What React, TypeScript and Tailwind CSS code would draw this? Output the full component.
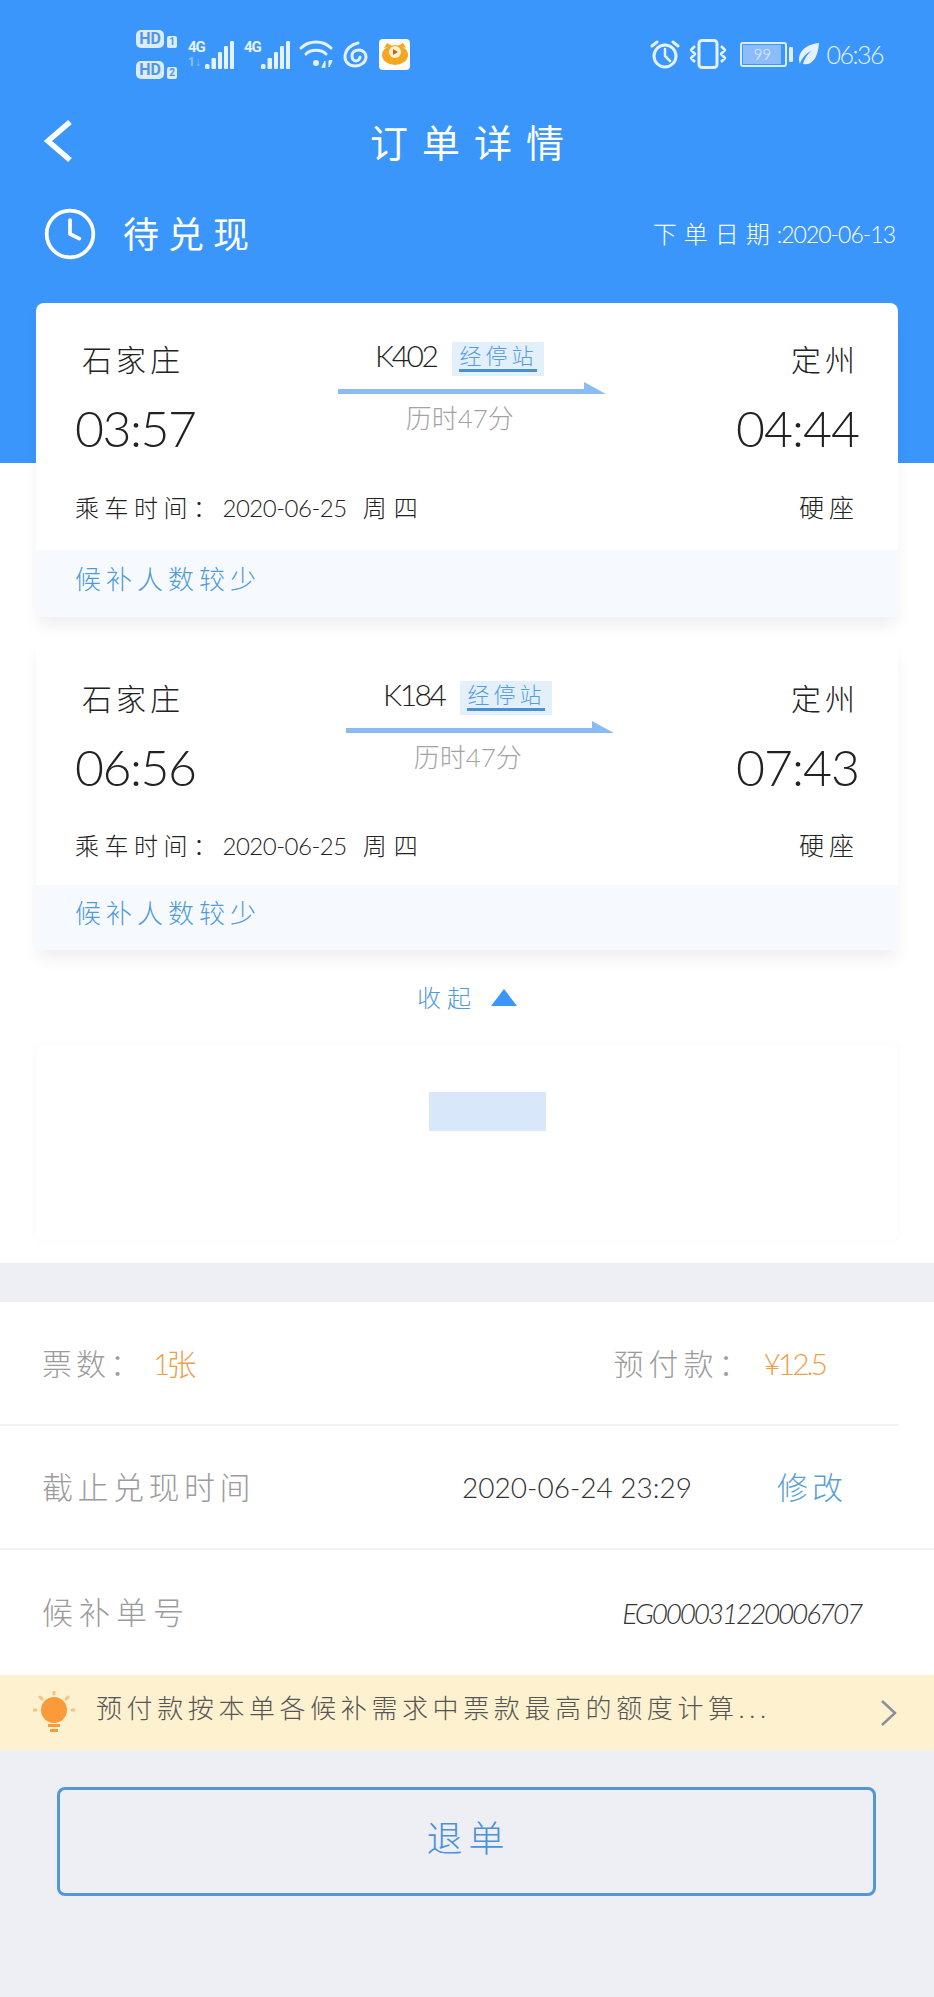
import { Clock } from 'lucide-react';

interface Trip {
  train: string;
  from: string;
  to: string;
  depart: string;
  arrive: string;
  routeClass: string;
  infoClass: string;
  noteClass: string;
}

const TRIPS: Trip[] = [
  {
    train: 'K402',
    from: '石家庄',
    to: '定州',
    depart: '03:57',
    arrive: '04:44',
    routeClass: 'ml-[12px]',
    infoClass: 'mt-[8px] h-[84px]',
    noteClass: 'h-[67px]',
  },
  {
    train: 'K184',
    from: '石家庄',
    to: '定州',
    depart: '06:56',
    arrive: '07:43',
    routeClass: 'ml-[28px]',
    infoClass: 'mt-[10px] h-[78px]',
    noteClass: 'h-[65px]',
  },
];

function Signal({ faint }: { faint?: boolean }) {
  return (
    <div className="flex items-end h-[30px]">
      <div className="flex flex-col w-[17px] h-[30px]">
        <span className="text-[15px] leading-[17px] font-bold text-[#e4f2ff] font-['Roboto',sans-serif] tracking-[-1px]">4G</span>
        {faint && <span className="text-[12px] leading-[12px] font-bold text-[#8fc1fb] font-['Roboto',sans-serif]">1↓</span>}
      </div>
      <svg width="30" height="28" viewBox="0 0 30 28" fill="#e4f2ff">
        <rect x="0" y="23" width="4.5" height="5" rx="1.5" />
        <rect x="6.5" y="17" width="4.5" height="11" rx="1" />
        <rect x="13" y="11" width="4" height="17" rx="1" />
        <rect x="19" y="5" width="4" height="23" rx="1" />
        <rect x="25" y="0" width="4" height="28" rx="1" />
      </svg>
    </div>
  );
}

function HdBadge({ n }: { n: number }) {
  return (
    <div className="flex items-end gap-[3px]">
      <span className="w-[28px] h-[18px] rounded-[5px] bg-[#dcecff] text-[#4f97e6] text-[16px] leading-[18px] font-bold text-center font-['Roboto',sans-serif]">HD</span>
      <span className="w-[10px] h-[12px] rounded-[2px] bg-[#dcecff] text-[#4f97e6] text-[10px] leading-[12px] font-bold text-center font-['Roboto',sans-serif]">{n}</span>
    </div>
  );
}

function StatusBar() {
  return (
    <div className="flex items-center h-[108px] pl-[136px] pr-[51px] text-[#e4f2ff]">
      <div className="flex flex-col gap-[13px] mr-[11px]">
        <HdBadge n={1} />
        <HdBadge n={2} />
      </div>
      <div className="flex gap-[9px] mr-[8px]">
        <Signal faint />
        <Signal />
      </div>
      <svg width="35" height="30" viewBox="0 0 35 30" fill="none" stroke="#e4f2ff" strokeWidth="3" strokeLinecap="round" className="mr-[9px]">
        <path d="M2 9C10 1 24 1 32 9" />
        <path d="M7 15C12 10 22 10 27 15" />
        <circle cx="17" cy="24" r="3" fill="#e4f2ff" stroke="none" />
        <path d="M23 28l3-6v6zM30 22v6l3-6z" fill="#e4f2ff" strokeWidth="1" />
      </svg>
      <svg width="26" height="28" viewBox="0 0 26 28" fill="none" stroke="#e4f2ff" strokeWidth="3" strokeLinecap="round" className="mr-[10px]">
        <path d="M15 3C9 4 2 9 2 17c0 5 4 9 10 9s11-4 11-9c0-4-3-7-7-7s-7 2-7 6c0 3 2 5 4 5s4-2 4-4" />
      </svg>
      <svg width="31" height="31" viewBox="0 0 31 31">
        <rect width="31" height="31" rx="4" fill="#fdfdfb" />
        <ellipse cx="16" cy="16" rx="13" ry="10" fill="#f5a623" />
        <path d="M5 9l3-5 5 3zM27 9l-3-5-5 3z" fill="#f5a623" />
        <circle cx="16" cy="13" r="6" fill="#fff1cf" />
        <path d="M14 10l5 3-5 3z" fill="#c4651c" />
      </svg>

      <div className="flex-1" />

      <svg width="30" height="30" viewBox="0 0 30 30" fill="none" stroke="#e4f2ff" strokeWidth="3" strokeLinecap="round" className="mr-[9px]">
        <circle cx="15" cy="17" r="11" />
        <path d="M15 10v7l5 5" strokeWidth="2.5" />
        <path d="M2 7l5-4M28 7l-5-4" />
      </svg>
      <svg width="38" height="30" viewBox="0 0 38 30" fill="none" stroke="#e4f2ff" strokeWidth="3" strokeLinejoin="round" className="mr-[13px]">
        <rect x="10" y="1.5" width="18" height="27" rx="3" />
        <path d="M6 7L2 11l4 4-4 4 4 4M32 7l4 4-4 4 4 4-4 4" strokeWidth="2.5" />
      </svg>
      <div className="flex items-center mr-[6px]">
        <div className="w-[47px] h-[25px] rounded-[3px] border-2 border-[#dcedff] p-[1px]">
          <div className="w-[38px] h-full bg-[#8dbcfb] text-center text-[15px] leading-[18px] font-light text-[#e4f2ff]">99</div>
        </div>
        <div className="w-[4px] h-[15px] ml-[2px] rounded-[1px] bg-[#dcedff]" />
      </div>
      <svg width="21" height="22" viewBox="0 0 21 22" className="mr-[6px]">
        <path d="M20 0C10 1 1 6 0 15c0 2 0 4 1 6 1-5 6-11 11-13-4 4-7 8-8 13 9 2 15-6 16-21z" fill="#e4f2ff" />
      </svg>
      <span className="text-[25px] leading-[30px] font-light tracking-[-1.5px]">06:36</span>
    </div>
  );
}

function RouteArrow() {
  return (
    <svg width="268" height="12" viewBox="0 0 268 12" className="block">
      <path d="M0 7H246V0L268 12H0Z" fill="#8abcf3" />
    </svg>
  );
}

function TripCard({ trip }: { trip: Trip }) {
  return (
    <div className="flex flex-col rounded-t-[8px] bg-white shadow-[0_10px_16px_-2px_rgba(0,0,0,0.07)]">
      <div className="flex justify-between px-[39px] pt-[34px]">
        <div className="flex flex-col items-start">
          <span className="text-[30px] leading-[44px] tracking-[4px] font-light text-[#222] pl-[7px]">{trip.from}</span>
          <span className="text-[50px] leading-[60px] mt-[17px] font-light text-[#222] tracking-[-1.5px]">{trip.depart}</span>
        </div>
        <div className={`flex flex-col items-center pt-[5px] ${trip.routeClass}`}>
          <div className="flex items-center gap-[16px] h-[34px] pr-[24px]">
            <span className="mb-[8px] text-[30px] leading-[34px] font-light text-[#222] tracking-[-2.5px]">{trip.train}</span>
            <span className="h-[34px] px-[7px] bg-[#e3f0fc] text-[22px] leading-[28px] tracking-[4px] font-light text-[#549ddd]">
              <span className="block border-b-[3px] border-[#4a90d0] h-[30px]">经停站</span>
            </span>
          </div>
          <div className="mt-[6px]">
            <RouteArrow />
          </div>
          <span className="text-[26px] leading-[32px] mt-[8px] font-light text-[#a3a3a3] -ml-[24px]">历时47分</span>
        </div>
        <div className="flex flex-col items-end">
          <span className="text-[30px] leading-[44px] tracking-[4px] font-light text-[#222]">{trip.to}</span>
          <span className="text-[50px] leading-[60px] mt-[17px] font-light text-[#222] tracking-[-1px]">{trip.arrive}</span>
        </div>
      </div>
      <div className={`flex items-center justify-between px-[39px] text-[#222] ${trip.infoClass}`}>
        <span className="text-[24px] font-light tracking-[-0.5px]">
          <span className="tracking-[5.5px]">乘车时间：</span>2020-06-25 <span className="tracking-[7px] ml-[10px]">周四</span>
        </span>
        <span className="text-[25px] tracking-[5px] font-light">硬座</span>
      </div>
      <div className={`flex items-center pb-[8px] px-[39px] bg-[#f6fafe] text-[26px] tracking-[5px] text-[#4f9ad9] font-light ${trip.noteClass}`}>
        候补人数较少
      </div>
    </div>
  );
}

export default function App() {
  return (
    <div className="flex flex-col w-[934px] h-[1997px] bg-[#eeeff4] font-['Lato','Noto_Sans_CJK_SC',sans-serif]">
      {/* Header */}
      <div className="h-[463px] bg-[#3b96fb] text-white">
        <StatusBar />
        <div className="relative flex items-center justify-center h-[72px] -mt-[2px]">
          <svg width="30" height="44" viewBox="0 0 30 44" fill="none" stroke="white" strokeWidth="5.5" className="absolute left-[43px] top-[13px]">
            <path d="M27 3L5 22l22 19" />
          </svg>
          <h1 className="text-[38px] leading-[48px] tracking-[14px] pl-[14px]">订单详情</h1>
        </div>
        <div className="flex items-center justify-between h-[70px] mt-[21px] pl-[42px] pr-[39px]">
          <div className="flex items-center gap-[25px]">
            <Clock size={56} strokeWidth={1.6} />
            <span className="text-[36px] tracking-[9px]">待兑现</span>
          </div>
          <span className="text-[23px] font-light tracking-[-1px]">
            <span className="text-[24px] tracking-[7px]">下单日期</span>:2020-06-13
          </span>
        </div>
      </div>

      {/* Trips */}
      <div className="flex flex-col h-[800px] bg-white px-[36px]">
        <div className="flex flex-col gap-[25px] -mt-[160px]">
          {TRIPS.map(trip => (
            <TripCard key={trip.train} trip={trip} />
          ))}
        </div>
        <div className="flex items-center justify-center gap-[14px] h-[95px] text-[#4f9ad9]">
          <span className="text-[24px] tracking-[6px] font-light">收起</span>
          <svg width="26" height="17" viewBox="0 0 26 17">
            <path d="M13 0L26 17H0Z" fill="#3b96fb" />
          </svg>
        </div>
        <div className="flex justify-center h-[195px] pt-[47px] rounded-[6px] bg-white shadow-[0_0_10px_rgba(0,0,0,0.03)]">
          <div className="w-[117px] h-[39px] ml-[41px] bg-[#d8e8fa]" />
        </div>
      </div>

      {/* Order info */}
      <div className="flex flex-col mt-[39px] bg-white text-[30px] font-light">
        <div className="flex items-center h-[124px] pl-[42px] w-[899px] border-b-2 border-[#f3f3f5]">
          <span className="tracking-[4px] text-[#9b9b9b]">票数：</span>
          <span className="text-[#eba14a] ml-[9px] tracking-[-4px]">1张</span>
          <div className="flex-1" />
          <span className="tracking-[5px] text-[#9b9b9b]">预付款：</span>
          <span className="text-[30px] tracking-[-3px] text-[#eba14a] ml-[10px] mr-[74px]">¥12.5</span>
        </div>
        <div className="flex items-center h-[124px] pl-[42px] pr-[87px] border-b-2 border-[#f3f3f5]">
          <span className="text-[31px] tracking-[4.5px] text-[#9b9b9b]">截止兑现时间</span>
          <div className="flex-1" />
          <span className="text-[28px] text-[#333] mr-[85px]">2020-06-24 23:29</span>
          <span className="text-[31px] tracking-[4px] text-[#5a9fd6]">修改</span>
        </div>
        <div className="flex items-center justify-between h-[125px] pl-[42px] pr-[73px]">
          <span className="text-[31px] tracking-[6px] text-[#9b9b9b]">候补单号</span>
          <span className="text-[28px] italic text-[#333] tracking-[-2.2px]">EG000031220006707</span>
        </div>
      </div>

      {/* Notice */}
      <div className="flex items-center h-[75px] pl-[33px] pr-[36px] bg-[#fdf1cf]">
        <svg width="42" height="44" viewBox="0 0 42 44" className="mr-[21px]">
          <circle cx="21" cy="19" r="13" fill="#fb9a38" />
          <rect x="15" y="33" width="12" height="3" fill="#fb9a38" />
          <rect x="17" y="38" width="8" height="3" fill="#fb9a38" />
          <g stroke="#f6c283" strokeWidth="3" strokeLinecap="round">
            <path d="M21 1v2M7 6l2 2M35 6l-2 2M1 19h2M39 19h2" />
          </g>
        </svg>
        <span className="flex-1 mb-[8px] text-[26px] tracking-[4.6px] text-[#555] font-light">预付款按本单各候补需求中票款最高的额度计算...</span>
        <svg width="18" height="26" viewBox="0 0 18 26" fill="none" stroke="#8a9096" strokeWidth="2.5">
          <path d="M2 1l13 12L2 25" />
        </svg>
      </div>

      {/* Action */}
      <div className="pl-[57px] pr-[58px] pt-[37px]">
        <button className="w-full h-[109px] pb-[8px] pl-[4px] rounded-[8px] border-[3px] border-[#5596d6] text-[36px] tracking-[6px] text-[#4a92dd] font-light">
          退单
        </button>
      </div>
    </div>
  );
}
